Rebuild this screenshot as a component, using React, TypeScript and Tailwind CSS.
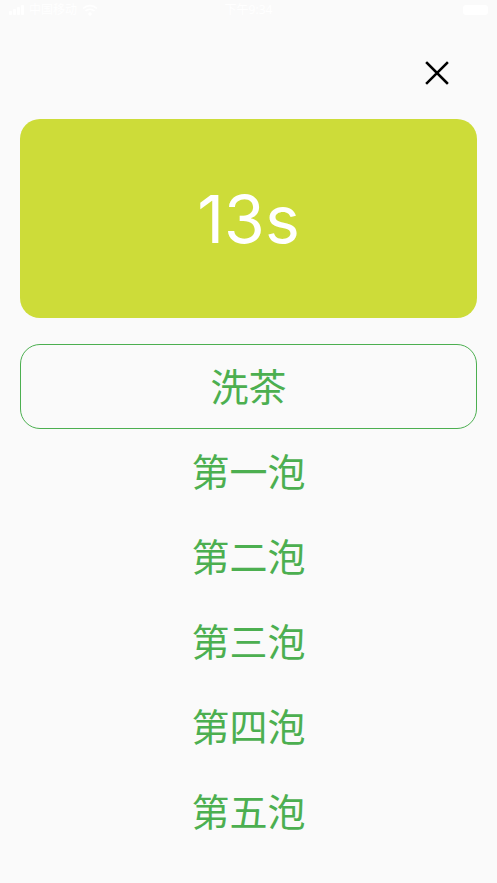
import React from "react";

const steps = ["第一泡", "第二泡", "第三泡", "第四泡", "第五泡"];

const StatusBar = () => (
  <div className="h-5 flex items-center justify-between px-[9px] text-white text-[12px]">
    <div className="flex items-center gap-[5px]">
      <div className="flex items-end gap-[1px] h-[10px]">
        <div className="w-[3px] h-[4px] bg-white rounded-[1px]" />
        <div className="w-[3px] h-[6px] bg-white rounded-[1px]" />
        <div className="w-[3px] h-[8px] bg-white rounded-[1px]" />
        <div className="w-[3px] h-[10px] bg-white rounded-[1px]" />
      </div>
      <span>中国移动</span>
      <svg width="16" height="12" viewBox="0 0 16 12" fill="none" stroke="white" strokeWidth="1.6">
        <path d="M1 4.5a10 10 0 0 1 14 0" />
        <path d="M3.5 7a6.5 6.5 0 0 1 9 0" />
        <circle cx="8" cy="10" r="1" fill="white" />
      </svg>
    </div>
    <span className="absolute left-1/2 -translate-x-1/2">下午9:34</span>
    <div className="w-[25px] h-[10px] rounded-[3px] bg-white" />
  </div>
);

export default function App() {
  return (
    <div
      className="relative w-[497px] h-[883px] bg-[#fafafa] overflow-hidden"
      style={{ fontFamily: '"Noto Sans", "Noto Sans CJK SC", sans-serif' }}
    >
      <StatusBar />
      <div className="px-5">
        <div className="flex justify-end pt-[41px] pr-[28px]">
          <svg width="24" height="24" viewBox="0 0 24 24" fill="none" stroke="black" strokeWidth="2.5" strokeLinecap="square">
            <path d="M2 2L22 22M22 2L2 22" />
          </svg>
        </div>
        <div className="mt-[34px] h-[199px] rounded-[20px] bg-[#cddc39] flex items-center justify-center">
          <span
            className="text-white text-[66px] leading-none"
            style={{ fontFamily: 'Inter, "Noto Sans", sans-serif', fontWeight: 400 }}
          >
            13s
          </span>
        </div>
        <div className="mt-[26px] flex flex-col">
          <div className="h-[85px] rounded-[20px] border border-[#4caf50] flex items-center justify-center text-[#4caf50] text-[38px]">
            洗茶
          </div>
          {steps.map((s) => (
            <div key={s} className="h-[85px] flex items-center justify-center text-[#4caf50] text-[38px]">
              {s}
            </div>
          ))}
        </div>
      </div>
    </div>
  );
}
